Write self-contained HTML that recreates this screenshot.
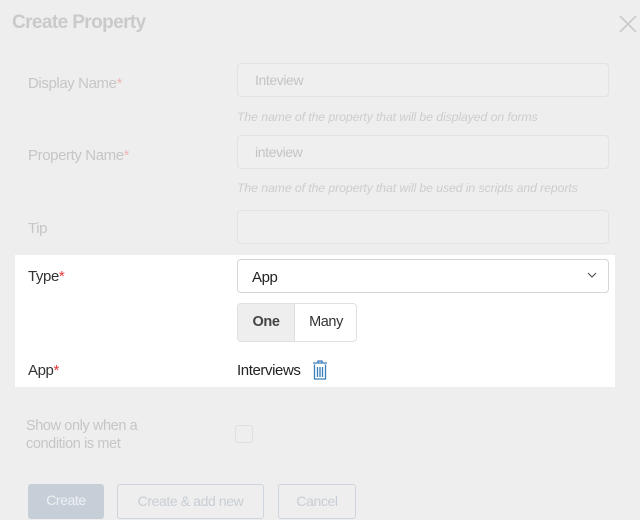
<!DOCTYPE html>
<html><head><style>
body{margin:0;width:640px;height:520px;background:#eeeeee;font-family:"Liberation Sans",sans-serif;position:relative;overflow:hidden;letter-spacing:-0.4px}
.a{position:absolute}
.t{left:12px;top:12px;font-size:19px;color:#cacaca;font-weight:bold;letter-spacing:-0.6px}
.l{left:28px;font-size:15px;color:#c6c6c6}
.s{color:#f0b8b8}
.in{left:237px;width:372px;height:34px;border:1px solid #e2e2e2;border-radius:4px;box-sizing:border-box;background:#efefef;font-size:14px;color:#c4c4c4;padding:8px 0 0 17px}
.h{left:237px;font-size:12.3px;font-style:italic;color:#cdcdcd;letter-spacing:-0.1px}
.p{left:15px;top:255px;width:600px;height:132px;background:#fff}
.b{font-size:15px;color:#333}
.r{color:#e53935}
.btn{top:484px;height:35px;box-sizing:border-box;border-radius:3px;font-size:14px;text-align:center;line-height:33px}
</style></head><body>
<div class="a t">Create Property</div>
<svg class="a" style="left:619px;top:15px" width="18" height="18"><path d="M1 1L17 17M17 1L1 17" stroke="#c8c8c8" stroke-width="1.6"/></svg>
<div class="a l" style="top:75px">Display Name<span class="s">*</span></div>
<div class="a in" style="top:63px">Inteview</div>
<div class="a h" style="top:110px">The name of the property that will be displayed on forms</div>
<div class="a l" style="top:147px">Property Name<span class="s">*</span></div>
<div class="a in" style="top:135px">inteview</div>
<div class="a h" style="top:181px">The name of the property that will be used in scripts and reports</div>
<div class="a l" style="top:220px">Tip</div>
<div class="a in" style="top:210px"></div>
<div class="a p"></div>
<div class="a b" style="left:28px;top:268px">Type<span class="r">*</span></div>
<div class="a" style="left:237px;top:259px;width:372px;height:34px;border:1px solid #d6d6d6;border-radius:4px;box-sizing:border-box;background:#fff;font-size:15px;color:#222;padding:9px 0 0 14px">App</div>
<svg class="a" style="left:587px;top:271px" width="10" height="8"><path d="M1 2L5 6L9 2" stroke="#555" fill="none" stroke-width="1.2"/></svg>
<div class="a" style="left:237px;top:303px;width:120px;height:39px;border:1px solid #e0e0e0;border-radius:4px;box-sizing:border-box;overflow:hidden;font-size:14.5px;color:#333">
<div class="a" style="left:0;top:0;width:56px;height:37px;background:#eeeeee;border-right:1px solid #e0e0e0;text-align:center;line-height:37px;font-weight:bold;color:#444">One</div>
<div class="a" style="left:57px;top:0;width:62px;height:37px;text-align:center;line-height:37px">Many</div></div>
<div class="a b" style="left:28px;top:362px">App<span class="r">*</span></div>
<div class="a b" style="left:237px;top:362px;color:#222">Interviews</div>
<svg class="a" style="left:311px;top:359px" width="18" height="22"><path d="M2 4H16M7 4V2H11V4M3.5 5.5V20H14.5V5.5M6.5 8V18M9 8V18M11.5 8V18" stroke="#3a7dbb" fill="none" stroke-width="1.3"/></svg>
<div class="a l" style="left:26px;top:417px;font-size:14.5px;line-height:18px">Show only when a<br>condition is met</div>
<div class="a" style="left:235px;top:425px;width:18px;height:18px;border:1px solid #e0e0e0;border-radius:3px;box-sizing:border-box"></div>
<div class="a btn" style="left:28px;width:76px;background:#c6cfd8;color:#eef1f4">Create</div>
<div class="a btn" style="left:117px;width:147px;border:1px solid #cfd5dc;color:#c8ced5">Create &amp; add new</div>
<div class="a btn" style="left:278px;width:78px;border:1px solid #cfd5dc;color:#c8ced5">Cancel</div>
</body></html>
